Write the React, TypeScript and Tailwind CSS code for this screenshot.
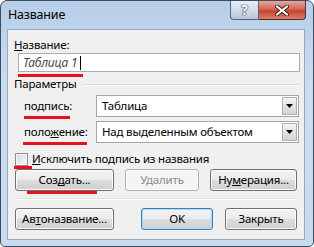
import type { ReactNode } from "react";

const FONT = "font-['Noto_Sans',sans-serif] tracking-[-0.2px]";

function RedMark({ className }: { className: string }) {
	return <span className={`absolute h-[3px] bg-[#e8101b] ${className}`} />;
}

function Btn({
	children,
	className = "",
	disabled,
	primary,
}: {
	children: ReactNode;
	className?: string;
	disabled?: boolean;
	primary?: boolean;
}) {
	let look =
		"border-[#707070] bg-[linear-gradient(#f2f2f2,#ebebeb_50%,#dddddd_50%,#cfcfcf)] shadow-[inset_0_0_0_1px_#fcfcfc] text-black";
	if (disabled)
		look = "border-[#adb2b5] bg-[#f4f4f4] text-[#8b8b8b] shadow-[inset_0_0_0_1px_#fcfcfc]";
	if (primary)
		look =
			"border-[#3c7fb1] bg-[linear-gradient(#f2f2f2,#ebebeb_50%,#dddddd_50%,#cfcfcf)] shadow-[inset_0_0_0_1px_#a9dcf6] text-black";
	return (
		<div
			className={`relative flex h-[22px] items-center justify-center rounded-[3px] border text-[11.5px] ${look} ${className}`}
		>
			{children}
		</div>
	);
}

function Combo({ value }: { value: string }) {
	return (
		<div className="flex h-[22px] flex-1 items-center border border-[#a5a5a5] bg-white pl-[5px]">
			<span className="flex-1">{value}</span>
			<div className="mr-[1px] flex h-[18px] w-[15px] items-center justify-center border border-[#b0b0b0] bg-[linear-gradient(#f4f4f4,#e3e3e3_50%,#d4d4d4)]">
				<svg width="7" height="4" viewBox="0 0 7 4">
					<path d="M0 0h7L3.5 4z" fill="#000" />
				</svg>
			</div>
		</div>
	);
}

export default function App() {
	return (
		<div
			className={`flex h-[247px] w-[314px] flex-col rounded-t-[7px] rounded-b-[5px] border border-[#3d4d60] bg-[linear-gradient(#b7cee8,#cadcf1_35%,#c7daef)] ${FONT} text-black`}
		>
			{/* заголовок окна */}
			<div className="flex h-[28px] items-start">
				<span className="pl-[7px] pt-[6px] text-[12.5px] leading-[16px]">Название</span>
				<div className="ml-auto mr-[7px] flex">
					<div className="flex h-[19px] w-[29px] items-center justify-center rounded-bl-[4px] border border-t-0 border-[#56677d] bg-[linear-gradient(#e6edf5,#d2dce8_50%,#b6c5d8)] text-[14px] font-bold leading-none text-white [text-shadow:0_0_1px_#2e3d50,0_0_1px_#2e3d50,0_0_1px_#2e3d50]">
						?
					</div>
					<div className="flex h-[19px] w-[47px] items-center justify-center rounded-br-[4px] border border-l-0 border-t-0 border-[#5a2a25] bg-[linear-gradient(#e8a99f,#d26756_45%,#c7402e_55%,#d8806b)]">
						<svg width="14" height="11" viewBox="0 0 14 11">
							<path d="M2 1.5l10 8M12 1.5l-10 8" stroke="#3a1f1b" strokeWidth="4" strokeLinecap="round" />
							<path d="M2 1.5l10 8M12 1.5l-10 8" stroke="#fff" strokeWidth="2.2" strokeLinecap="round" />
						</svg>
					</div>
				</div>
			</div>

			{/* содержимое диалога */}
			<div className="mb-[6px] ml-[6px] mr-[8px] flex flex-1 flex-col border border-[#98a8bd] bg-[#f0f0f0] text-[11.5px]">
				<div className="ml-[6px] mt-[7px] h-[16px] leading-[16px]">
					<u>Н</u>азвание:
				</div>
				<div className="relative ml-[10px] mr-[4px] flex h-[19px] items-center border border-[#abadb3] bg-white pl-[4px]">
					<span className="text-[12px] italic text-[#4a4a4a]">Таблица 1</span>
					<span className="ml-[3px] h-[14px] w-px bg-black" />
					<RedMark className="-bottom-[6px] -left-px w-[65px]" />
				</div>

				<div className="ml-[6px] mr-[5px] mt-[5px] flex h-[14px] items-center leading-[14px]">
					<span>Параметры</span>
					<span className="ml-[5px] flex-1 border-t border-[#dcdcdc] shadow-[0_1px_0_#fff]" />
				</div>

				<div className="ml-[16px] mr-[5px] mt-[4px] flex h-[22px] items-center">
					<span className="relative w-[72px] leading-[16px]">
						по<u>д</u>пись:
						<RedMark className="-bottom-[5px] left-0 w-[46px]" />
					</span>
					<Combo value="Таблица" />
				</div>
				<div className="ml-[16px] mr-[5px] mt-[4px] flex h-[22px] items-center">
					<span className="relative w-[72px] leading-[16px]">
						поло<u>ж</u>ение:
						<RedMark className="-bottom-[5px] -left-px w-[64px]" />
					</span>
					<Combo value="Над выделенным объектом" />
				</div>

				<div className="ml-[7px] mt-[8px] flex h-[16px] items-center">
					<span className="relative h-[13px] w-[13px] border border-[#8f8f8f] bg-[linear-gradient(135deg,#d6d6d6,#fbfbfb)] shadow-[inset_0_0_0_1px_#f4f4f4]">
						<RedMark className="-bottom-[4px] -left-[2px] w-[18px]" />
					</span>
					<span className="ml-[4px] leading-[16px]">
						<u>И</u>сключить подпись из названия
					</span>
				</div>

				<div className="ml-[7px] mt-[2px] flex">
					<Btn className="w-[99px]">
						Соз<u>д</u>ать...
						<RedMark className="-bottom-[4px] left-[11px] w-[70px]" />
					</Btn>
					<Btn disabled className="ml-[11px] w-[74px]">
						Удалить
					</Btn>
					<Btn className="ml-[11px] w-[87px]">
						Ну<u>м</u>ерация...
					</Btn>
				</div>

				<div className="ml-[7px] mr-[7px] mt-[7px] border-t border-[#dfdfdf] shadow-[0_1px_0_#fff]" />

				<div className="ml-[7px] mt-[9px] flex">
					<Btn className="w-[99px]">
						Ав<u>т</u>оназвание...
					</Btn>
					<Btn primary className="ml-[27px] w-[72px]">
						OK
					</Btn>
					<Btn className="ml-[12px] w-[72px]">Закрыть</Btn>
				</div>
			</div>
		</div>
	);
}
